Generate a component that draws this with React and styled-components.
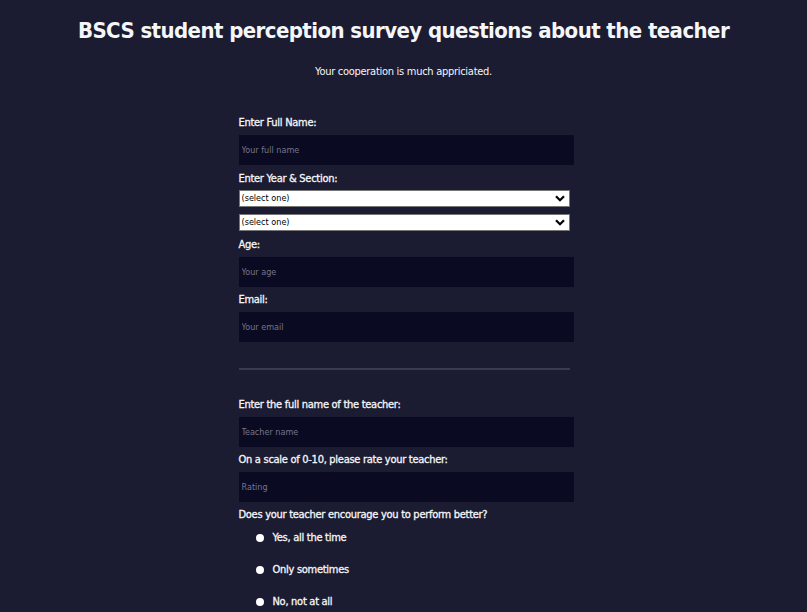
import React from "react";
import styled, { createGlobalStyle } from "styled-components";

const Global = createGlobalStyle`
  html, body { margin: 0; padding: 0; }
  body {
    background: #1b1b32;
    color: #f5f6f7;
    font-family: "DejaVu Sans Condensed", "DejaVu Sans", sans-serif;
    min-height: 612px;
  }
`;

const Page = styled.div`
  display: flex;
  flex-direction: column;
  align-items: center;
  padding-top: 18px;
`;

const Title = styled.h1`
  margin: 0;
  font-size: 22px;
  line-height: 26px;
  font-weight: bold;
  letter-spacing: -0.58px;
  text-align: center;
  color: #f5f6f7;
`;

const Subtitle = styled.p`
  margin: 21px 0 0;
  font-size: 11px;
  line-height: 14px;
  letter-spacing: -0.28px;
  text-align: center;
`;

const Form = styled.form`
  width: 331px;
  margin-top: 36px;
  display: flex;
  flex-direction: column;
  align-self: center;
  padding-left: 1px;
`;

const Label = styled.label`
  display: block;
  font-size: 11px;
  line-height: 12px;
  padding-top: 2px;
  letter-spacing: -0.28px;
  -webkit-text-stroke: 0.3px #f5f6f7;
  margin-top: ${(p) => p.$mt ?? 5.5}px;
`;

const TextInput = styled.input`
  box-sizing: border-box;
  display: block;
  width: 335px;
  height: 30px;
  margin: 6px 0 0;
  background: #0a0a23;
  border: 1px solid #0a0a23;
  color: #fff;
  padding: 0 2px;
  font-family: "DejaVu Sans Condensed", "DejaVu Sans", sans-serif;
  font-size: 9px;
  outline: none;
  &::placeholder { color: #75758a; }
`;

const SelectWrap = styled.div`
  position: relative;
  width: 331px;
  height: 17px;
  margin-top: ${(p) => p.$mt}px;
`;

const Select = styled.select`
  appearance: none;
  display: block;
  box-sizing: border-box;
  width: 100%;
  height: 17px;
  margin: 0;
  padding: 0 2px;
  background: #fff;
  border: 1px solid #767676;
  border-radius: 0;
  color: #000;
  font-family: "DejaVu Sans Condensed", "DejaVu Sans", sans-serif;
  font-size: 9px;
  line-height: 15px;
`;

const Chevron = styled.svg`
  position: absolute;
  right: 5px;
  top: 5px;
  pointer-events: none;
`;

const Rule = styled.hr`
  width: 331px;
  margin: 26px 0 0;
  border: none;
  height: 2px;
  background: #3b3b4f;
`;

const RadioList = styled.div`
  display: flex;
  flex-direction: column;
  gap: 18px;
  margin-top: 10px;
  padding-left: 17px;
`;

const RadioRow = styled.label`
  display: flex;
  align-items: center;
  gap: 9px;
  font-size: 11px;
  line-height: 14px;
  letter-spacing: -0.28px;
  -webkit-text-stroke: 0.3px #f5f6f7;
`;

const Dot = styled.input`
  appearance: none;
  margin: 0;
  width: 8px;
  height: 8px;
  border-radius: 50%;
  background: #fff;
  border: none;
`;

function SelectBox({ mt }) {
  return (
    <SelectWrap $mt={mt}>
      <Select defaultValue="">
        <option value="">(select one)</option>
      </Select>
      <Chevron width="10" height="7" viewBox="0 0 10 7">
        <path d="M1 1.2 L5 5.2 L9 1.2" fill="none" stroke="#000" strokeWidth="2.2" />
      </Chevron>
    </SelectWrap>
  );
}

export default function App() {
  return (
    <>
      <Global />
      <Page>
        <Title>BSCS student perception survey questions about the teacher</Title>
        <Subtitle>Your cooperation is much appriciated.</Subtitle>
        <Form>
          <Label $mt={0}>Enter Full Name:</Label>
          <TextInput placeholder="Your full name" />
          <Label>Enter Year &amp; Section:</Label>
          <SelectBox mt={5.5} />
          <SelectBox mt={7} />
          <Label $mt={6}>Age:</Label>
          <TextInput placeholder="Your age" />
          <Label $mt={5}>Email:</Label>
          <TextInput placeholder="Your email" />
          <Rule />
          <Label $mt={27}>Enter the full name of the teacher:</Label>
          <TextInput placeholder="Teacher name" />
          <Label $mt={5}>On a scale of 0-10, please rate your teacher:</Label>
          <TextInput placeholder="Rating" />
          <Label $mt={5}>Does your teacher encourage you to perform better?</Label>
          <RadioList>
            <RadioRow><Dot type="radio" name="enc" />Yes, all the time</RadioRow>
            <RadioRow><Dot type="radio" name="enc" />Only sometimes</RadioRow>
            <RadioRow><Dot type="radio" name="enc" />No, not at all</RadioRow>
          </RadioList>
        </Form>
      </Page>
    </>
  );
}
